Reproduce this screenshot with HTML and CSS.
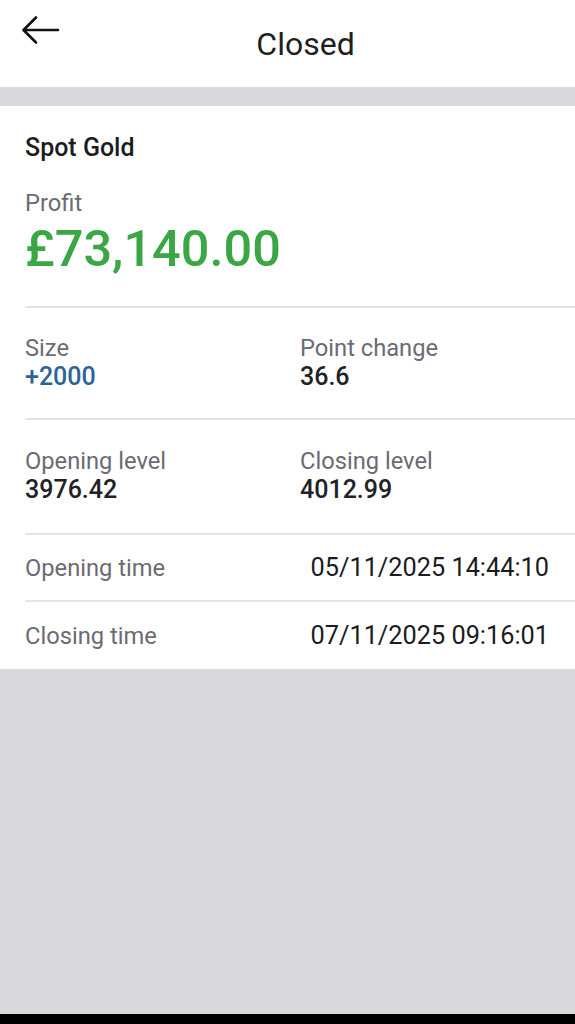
FILE: index.html
```html
<!DOCTYPE html>
<html lang="en">
<head>
  <meta charset="UTF-8" />
  <meta name="viewport" content="width=575" />
  <title>Closed</title>
  <link rel="stylesheet" href="styles.css">
</head>
<body>
  <div class="screen">
    <header class="topbar">
      <button class="back-btn" aria-label="Back">
        <svg width="40" height="30" viewBox="0 0 40 30" fill="none" stroke="#111" stroke-width="2.6" stroke-linecap="round" stroke-linejoin="round">
          <path d="M37 15H3M15 2.5L2.5 15 15 27.5"/>
        </svg>
      </button>
      <h1 class="title">Closed</h1>
    </header>
    <div class="spacer"></div>
    <section class="card">
      <div class="market">Spot Gold</div>
      <div class="profit">
        <div class="label">Profit</div>
        <div class="profit-value">£73,140.00</div>
      </div>
      <div class="grid-row">
        <div class="cell">
          <div class="label">Size</div>
          <div class="value blue">+2000</div>
        </div>
        <div class="cell">
          <div class="label">Point change</div>
          <div class="value">36.6</div>
        </div>
      </div>
      <div class="grid-row">
        <div class="cell">
          <div class="label">Opening level</div>
          <div class="value">3976.42</div>
        </div>
        <div class="cell">
          <div class="label">Closing level</div>
          <div class="value">4012.99</div>
        </div>
      </div>
      <div class="line-row">
        <div class="label">Opening time</div>
        <div class="time">05/11/2025 14:44:10</div>
      </div>
      <div class="line-row last">
        <div class="label">Closing time</div>
        <div class="time">07/11/2025 09:16:01</div>
      </div>
    </section>
    <div class="filler"></div>
  </div>
  <div class="navbar"></div>
</body>
</html>
```

FILE: styles.css
```css
html, body {
  margin: 0;
  padding: 0;
}
body {
  font-family: Roboto, "Noto Sans", sans-serif;
  background: #d9d8dd;
  color: #1c1c1f;
  width: 575px;
  height: 1024px;
  overflow: hidden;
  display: flex;
  flex-direction: column;
}
.screen {
  flex: 1;
  display: flex;
  flex-direction: column;
}
.topbar {
  height: 87px;
  background: #fff;
  position: relative;
  display: flex;
  justify-content: center;
  align-items: center;
}
.back-btn {
  position: absolute;
  left: 21px;
  top: 15px;
  background: none;
  border: none;
  padding: 0;
  margin: 0;
  line-height: 0;
}
.title {
  margin: 0 0 0 36px;
  font-size: 32px;
  font-weight: 400;
  color: #1f1f22;
  line-height: 40px;
}
.spacer {
  height: 19px;
}
.card {
  background: #fff;
  padding-left: 25px;
}
.market {
  font-size: 25px;
  font-weight: 500;
  color: #1c1c1f;
  padding-top: 27px;
  line-height: 30px;
}
.label {
  font-size: 23.7px;
  color: #6b6b73;
  line-height: 28px;
}
.value {
  font-size: 25px;
  font-weight: 500;
  color: #222226;
  line-height: 30px;
}
.value.blue {
  color: #2b6596;
}
.time {
  font-size: 25.3px;
  font-weight: 400;
  color: #1c1c1f;
  line-height: 30px;
}
.profit {
  padding-top: 26px;
  padding-bottom: 29px;
  border-bottom: 2px solid #e4e4e6;
}
.profit-value {
  margin-top: 4px;
  font-size: 50.5px;
  font-weight: 500;
  color: #3aa744;
  line-height: 56px;
}
.grid-row {
  display: grid;
  grid-template-columns: 275px 1fr;
  padding: 26px 0 26px;
  border-bottom: 2px solid #e4e4e6;
}
.grid-row + .grid-row {
  padding: 27px 0 28px;
}
.line-row {
  display: flex;
  justify-content: space-between;
  align-items: center;
  height: 65px;
  padding-right: 26px;
  border-bottom: 2px solid #e4e4e6;
}
.line-row.last {
  height: 67px;
  border-bottom: none;
}
.filler {
  flex: 1;
}
.navbar {
  height: 10px;
  background: #000;
}
```
